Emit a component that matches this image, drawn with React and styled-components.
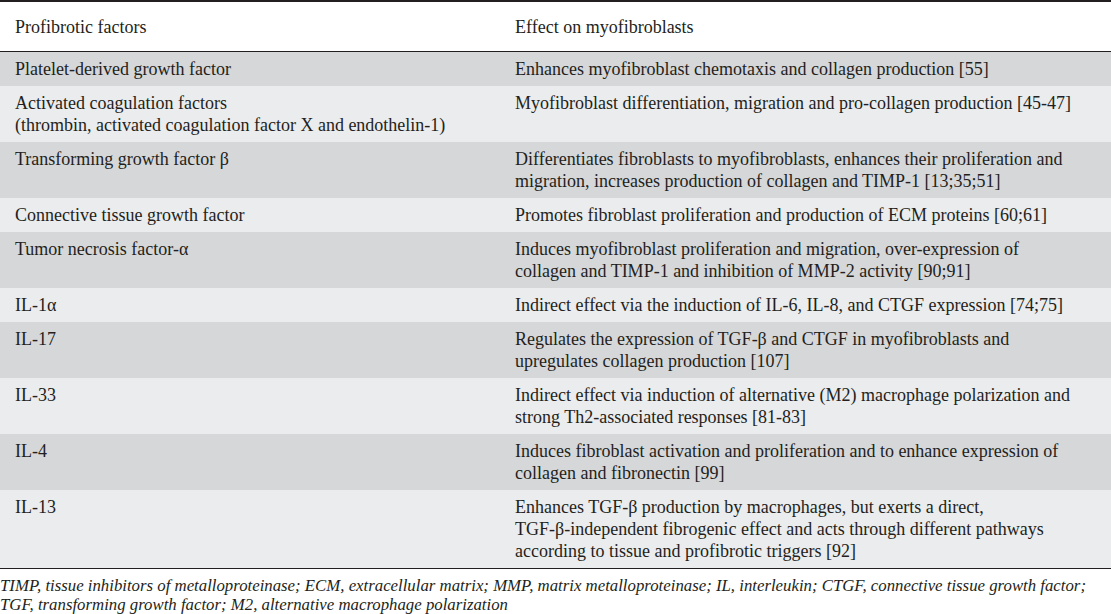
import styled, { createGlobalStyle } from "styled-components";

const GlobalStyle = createGlobalStyle`
  html, body {
    margin: 0;
    padding: 0;
    background: #fff;
  }
  body {
    font-family: "Liberation Serif", "Times New Roman", serif;
    color: #231f20;
  }
`;

const Wrapper = styled.div`
  width: 1111px;
`;

const Table = styled.table`
  width: 100%;
  border-collapse: collapse;
  table-layout: fixed;
  border-top: 2px solid #231f20;
  border-bottom: 1px solid #231f20;
  font-size: 18px;
  line-height: 22px;
`;

const HeadCell = styled.th`
  text-align: left;
  font-weight: normal;
  height: 49px;
  padding: 0 15px;
  vertical-align: middle;
  border-bottom: 1px solid #231f20;
  background: #fff;
`;

const Row = styled.tr`
  background: ${p => (p.$dark ? "#d6d7d9" : "#ebecee")};
`;

const Cell = styled.td`
  padding: 6px 15px;
  vertical-align: top;
`;

const Footnote = styled.p`
  margin: 0;
  padding-top: 7px;
  font-style: italic;
  font-size: 16.8px;
  line-height: 19px;
`;

const rows = [
  ["Platelet-derived growth factor", ["Enhances myofibroblast chemotaxis and collagen production [55]"]],
  [["Activated coagulation factors", "(thrombin, activated coagulation factor X and endothelin-1)"], ["Myofibroblast differentiation, migration and pro-collagen production [45-47]"]],
  ["Transforming growth factor β", ["Differentiates fibroblasts to myofibroblasts, enhances their proliferation and", "migration, increases production of collagen and TIMP-1 [13;35;51]"]],
  ["Connective tissue growth factor", ["Promotes fibroblast proliferation and production of ECM proteins [60;61]"]],
  ["Tumor necrosis factor-α", ["Induces myofibroblast proliferation and migration, over-expression of", "collagen and TIMP-1 and inhibition of MMP-2 activity [90;91]"]],
  ["IL-1α", ["Indirect effect via the induction of IL-6, IL-8, and CTGF expression [74;75]"]],
  ["IL-17", ["Regulates the expression of TGF-β and CTGF in myofibroblasts and", "upregulates collagen production [107]"]],
  ["IL-33", ["Indirect effect via induction of alternative (M2) macrophage polarization and", "strong Th2-associated responses [81-83]"]],
  ["IL-4", ["Induces fibroblast activation and proliferation and to enhance expression of", "collagen and fibronectin [99]"]],
  ["IL-13", ["Enhances TGF-β production by macrophages, but exerts a direct,", "TGF-β-independent fibrogenic effect and acts through different pathways", "according to tissue and profibrotic triggers [92]"]],
];

function Lines({ items }) {
  const list = Array.isArray(items) ? items : [items];
  return list.map((line, i) => (
    <span key={i}>
      {i > 0 && <br />}
      {line}
    </span>
  ));
}

export default function App() {
  return (
    <Wrapper>
      <GlobalStyle />
      <Table>
        <colgroup>
          <col style={{ width: 500 }} />
          <col />
        </colgroup>
        <thead>
          <tr>
            <HeadCell>Profibrotic factors</HeadCell>
            <HeadCell>Effect on myofibroblasts</HeadCell>
          </tr>
        </thead>
        <tbody>
          {rows.map(([factor, effect], i) => (
            <Row key={i} $dark={i % 2 === 0}>
              <Cell><Lines items={factor} /></Cell>
              <Cell><Lines items={effect} /></Cell>
            </Row>
          ))}
        </tbody>
      </Table>
      <Footnote>
        TIMP, tissue inhibitors of metalloproteinase; ECM, extracellular matrix; MMP, matrix metalloproteinase; IL, interleukin; CTGF, connective tissue growth factor;
        <br />
        TGF, transforming growth factor; M2, alternative macrophage polarization
      </Footnote>
    </Wrapper>
  );
}
